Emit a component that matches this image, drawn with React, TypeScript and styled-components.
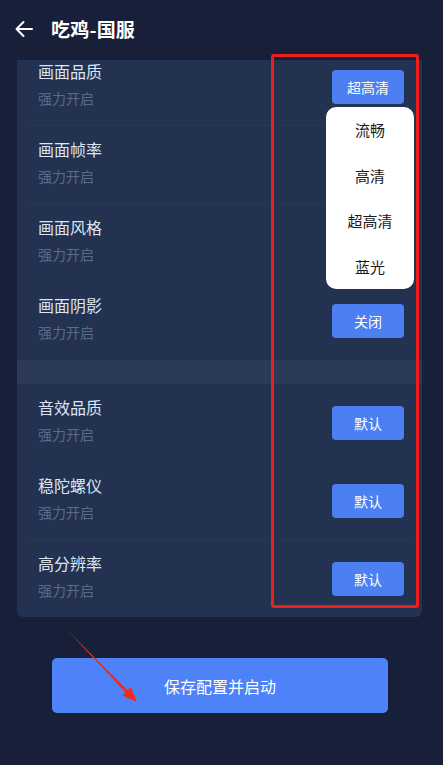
import React from 'react';
import styled, { createGlobalStyle } from 'styled-components';

const GlobalStyle = createGlobalStyle`
  html, body {
    margin: 0;
    padding: 0;
    background-color: #172038;
  }

  body {
    font-family: 'Noto Sans CJK SC', 'Noto Sans', sans-serif;
  }
`;

const settings = [
  { title: '画面品质', value: '超高清', divided: true },
  { title: '画面帧率', value: '', divided: true },
  { title: '画面风格', value: '', divided: false },
  { title: '画面阴影', value: '关闭', divided: false },
];

const extras = [
  { title: '音效品质', value: '默认', divided: false },
  { title: '稳陀螺仪', value: '默认', divided: true },
  { title: '高分辨率', value: '默认', divided: false },
];

const options = ['流畅', '高清', '超高清', '蓝光'];

const App = () => {
  return (
    <React.Fragment>
      <GlobalStyle />
      <Page>
        <Header>
          <BackButton>
            <svg width="20" height="20" viewBox="0 0 20 20" fill="none">
              <path
                d="M18 10H2.5M9.5 3L2.5 10l7 7"
                stroke="#fff"
                strokeWidth="2"
                strokeLinecap="round"
                strokeLinejoin="round"
              />
            </svg>
          </BackButton>
          <Title>吃鸡-国服</Title>
        </Header>

        <Card>
          <CardScroll>
            {settings.map((item) => (
              <SettingRow key={item.title} $divided={item.divided}>
                <TextBox>
                  <RowTitle>{item.title}</RowTitle>
                  <RowSub>强力开启</RowSub>
                </TextBox>
                {item.value && <ValueButton>{item.value}</ValueButton>}
              </SettingRow>
            ))}

            <Band />

            {extras.map((item) => (
              <SettingRow key={item.title} $divided={item.divided}>
                <TextBox>
                  <RowTitle>{item.title}</RowTitle>
                  <RowSub>强力开启</RowSub>
                </TextBox>
                <ValueButton>{item.value}</ValueButton>
              </SettingRow>
            ))}
          </CardScroll>

          {/* ** 下拉选项 ** */}
          <Dropdown>
            {options.map((opt) => (
              <Option key={opt}>{opt}</Option>
            ))}
          </Dropdown>
        </Card>

        <SaveButton>保存配置并启动</SaveButton>

        {/* ** 标注 ** */}
        <Highlight />
        <Pointer width="85" height="85" viewBox="0 0 85 85">
          <polygon
            points="7,5 67.6,65.2 70.8,62 77,77 62.2,70.4 65.4,67.2"
            fill="#f22a1d"
          />
        </Pointer>
      </Page>
    </React.Fragment>
  );
};

const Page = styled.div`
  position: relative;
  width: 443px;
  height: 765px;
  overflow: hidden;
  background-color: #172038;
`;

const Header = styled.div`
  height: 60px;
  display: flex;
  align-items: center;
  padding: 0 0 3px 14px;
  box-sizing: border-box;
`;

const BackButton = styled.div`
  width: 20px;
  height: 20px;
  display: flex;
  margin-right: 17px;
`;

const Title = styled.h1`
  margin: 0;
  font-size: 19px;
  font-weight: 700;
  color: #ffffff;
  letter-spacing: 0.2px;
`;

const Card = styled.div`
  position: relative;
  width: 405px;
  margin-left: 17px;
  height: 557px;
  background-color: #233250;
  border-radius: 0 0 6px 6px;
`;

const CardScroll = styled.div`
  height: 100%;
  overflow: hidden;

  & > :first-child {
    margin-top: -12px;
  }
`;

const SettingRow = styled.div<{ $divided: boolean }>`
  height: 78px;
  display: flex;
  align-items: center;
  justify-content: space-between;
  padding: 0 18px 0 21px;
  box-sizing: border-box;
  position: relative;

  &::after {
    content: '';
    display: ${({ $divided }) => ($divided ? 'block' : 'none')};
    position: absolute;
    left: 11px;
    right: 8px;
    bottom: 0;
    height: 1px;
    background-color: #283858;
  }
`;

const TextBox = styled.div`
  display: flex;
  flex-direction: column;
  gap: 4px;
  margin-top: -6px;
`;

const RowTitle = styled.p`
  margin: 0;
  font-size: 16px;
  line-height: 24px;
  color: #dce4f2;
`;

const RowSub = styled.p`
  margin: 0;
  font-size: 14px;
  line-height: 22px;
  color: #5a6b88;
`;

const ValueButton = styled.button`
  width: 72px;
  height: 34px;
  border: none;
  border-radius: 4px;
  background-color: #4b7ff2;
  color: #ffffff;
  font-family: inherit;
  font-size: 14px;
  padding: 0;
`;

const Band = styled.div`
  height: 24px;
  background-color: #2b3a59;
`;

const Dropdown = styled.ul`
  position: absolute;
  top: 47px;
  left: 309px;
  width: 88px;
  margin: 0;
  padding: 0;
  list-style: none;
  background-color: #ffffff;
  border-radius: 10px;
`;

const Option = styled.li`
  height: 45.5px;
  display: flex;
  align-items: center;
  justify-content: center;
  font-size: 15px;
  color: #1a1a1a;
`;

const SaveButton = styled.button`
  display: block;
  width: 336px;
  height: 55px;
  margin: 41px 0 0 52px;
  border: none;
  border-radius: 5px;
  background-color: #4e82f8;
  color: #ffffff;
  font-family: inherit;
  font-size: 16px;
  padding: 0;
`;

const Highlight = styled.div`
  position: absolute;
  left: 271px;
  top: 54px;
  width: 148px;
  height: 554px;
  box-sizing: border-box;
  border: 3px solid #f01e1a;
  border-radius: 3px;
`;

const Pointer = styled.svg`
  position: absolute;
  left: 60px;
  top: 625px;
`;

export default App;
